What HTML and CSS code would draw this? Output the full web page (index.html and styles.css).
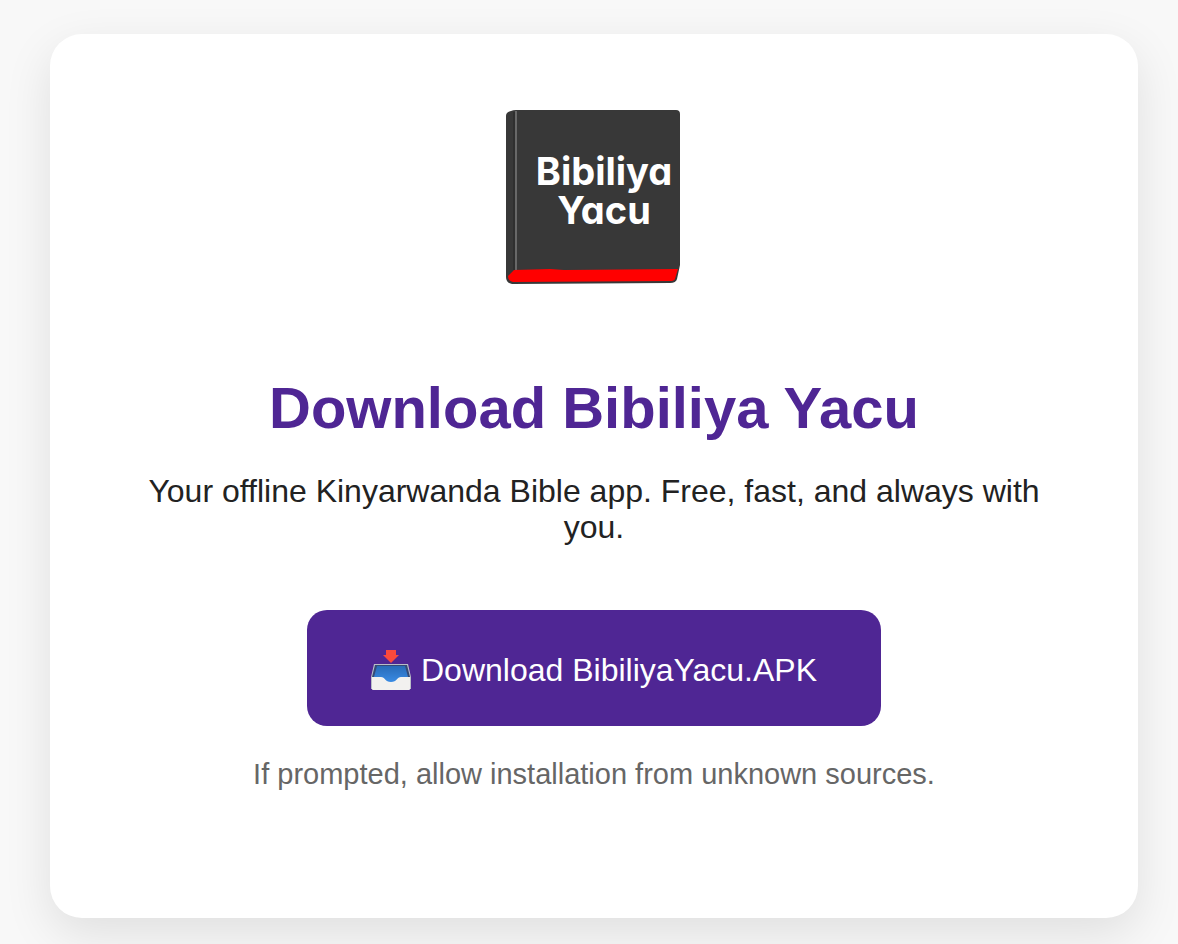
FILE: index.html
```html
<!DOCTYPE html>
<html lang="en">
<head>
<meta charset="utf-8">
<meta name="viewport" content="width=device-width, initial-scale=1">
<title>Download Bibiliya Yacu</title>
<link rel="stylesheet" href="styles.css">
</head>
<body class="page">
<main class="card">
  <svg class="logo" viewBox="0 0 180 180" role="img" aria-label="Bibiliya Yacu">
    <path fill="#383838" d="M7 2Q9 1 12 1H172Q176 1 176 5V156L173 170Q172 174 166 174L8 175Q2 174 2 168V7Q2 3 7 2Z"/>
    <path fill="none" stroke="#262626" stroke-width="1" d="M10 3V161"/>
    <path fill="none" stroke="#686868" stroke-width="2" d="M12 2V161"/>
    <path fill="#f00" d="M10 161L46 160L60 161L174 160L171 170Q170 172 166 172L9 173Q4 172 4 167Z"/>
    <text class="logo-text" x="100" y="76">Bibiliya</text>
    <text class="logo-text" x="100" y="115">Yacu</text>
  </svg>
  <h1 class="title">Download Bibiliya Yacu</h1>
  <p class="lead">Your offline Kinyarwanda Bible app. Free, fast, and always with you.</p>
  <a class="download" href="#">
    <svg class="tray" viewBox="0 0 40 40" aria-hidden="true">
      <defs>
        <linearGradient id="well" x1="0" y1="0" x2="0" y2="1">
          <stop offset="0" stop-color="#286bb8"/>
          <stop offset="1" stop-color="#3b8de6"/>
        </linearGradient>
      </defs>
      <path fill="#b9bdc7" d="M3 14H37L40 27V39H0V27Z"/>
      <path fill="#344b77" d="M4 15H36L39 27H1Z"/>
      <path fill="url(#well)" d="M6 16H34L37 27L30 33H10L3 27Z"/>
      <path fill="#f2f1ef" d="M1 27H10C14 27 14 32 20 32S26 27 30 27H39V39Q39 40 38 40H2Q1 40 1 39Z"/>
      <path fill="#fa493d" d="M15 0H25V5H28L20 13L12 5H15Z"/>
    </svg>
    <span>Download BibiliyaYacu.APK</span>
  </a>
  <p class="note">If prompted, allow installation from unknown sources.</p>
</main>
</body>
</html>
```
FILE: styles.css
```css
* {
  box-sizing: border-box;
}

.page {
  margin: 0;
  padding: 34px 40px 26px 50px;
  background: #f8f8f8;
  color: #222;
  font-family: "Liberation Sans", Arial, sans-serif;
}

.card {
  display: flex;
  flex-direction: column;
  align-items: center;
  padding: 75px 64px 127px;
  border-radius: 32px;
  background: #fff;
  box-shadow: 0 16px 48px rgba(0, 0, 0, 0.1);
  text-align: center;
}

.logo {
  display: block;
  width: 180px;
  height: 180px;
}

.logo-text {
  fill: #fff;
  font-family: Inter, sans-serif;
  font-feature-settings: "cv11";
  font-size: 38px;
  font-weight: 700;
  text-anchor: middle;
}

.title {
  margin: 86px 0 0;
  color: #4f2694;
  font-size: 58px;
  line-height: 66px;
}

.lead {
  margin: 32px 0 0;
  font-size: 32px;
  line-height: 36px;
}

.download {
  display: flex;
  align-items: center;
  gap: 10px;
  margin-top: 65px;
  padding: 42px 64px 38px;
  border-radius: 20px;
  background: #4f2694;
  color: #fff;
  font-size: 32px;
  line-height: 36px;
  text-decoration: none;
}

.tray {
  width: 40px;
  height: 40px;
  margin: -2px 0;
}

.note {
  margin: 31px 0 0;
  color: #666;
  font-size: 29px;
  line-height: 34px;
}
```
